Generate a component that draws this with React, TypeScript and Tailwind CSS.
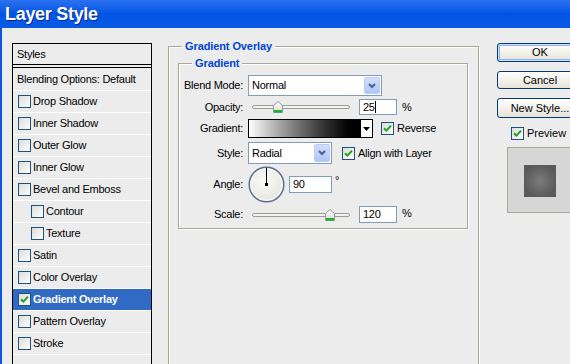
import React from 'react';

const font = "font-['Liberation_Sans',Arial,sans-serif]";

function Check() {
  return (
    <svg width="9" height="9" viewBox="0 0 9 9">
      <path d="M1 4.2 L3.4 6.6 L8 1.6" stroke="#21a121" strokeWidth="2" fill="none" />
    </svg>
  );
}

function Box({ checked }: { checked?: boolean }) {
  return (
    <span className="flex h-[13px] w-[13px] shrink-0 items-center justify-center border border-[#1c5180] bg-linear-to-br from-[#dcdcd7] to-white">
      {checked && <Check />}
    </span>
  );
}

function Select({ width, value }: { width: string; value: string }) {
  return (
    <div className={`flex h-full ${width} items-center border border-[#7f9db9] bg-white`}>
      <span className="flex-1 pl-[3px]">{value}</span>
      <span className="m-[1px] flex h-[calc(100%-2px)] w-[16px] items-center justify-center rounded-[2px] border border-[#bccdf5] bg-linear-to-b from-[#d2defd] to-[#b0c6f8]">
        <svg width="8" height="6" viewBox="0 0 8 6">
          <path d="M1 1 L4 4 L7 1" stroke="#4d6185" strokeWidth="2" fill="none" />
        </svg>
      </span>
    </div>
  );
}

function Slider({ thumb }: { thumb: number }) {
  return (
    <div className="relative ml-[4px] flex h-full w-[98px] items-center">
      <div className="h-[4px] w-full rounded-full border border-[#9d9c99] bg-[#f3f3f0]" />
      <svg
        className="absolute top-1/2 -translate-y-1/2"
        style={{ left: thumb }}
        width="10"
        height="12"
        viewBox="0 0 10 12"
      >
        <defs>
          <linearGradient id="th" x1="0" y1="0" x2="0" y2="1">
            <stop offset="0" stopColor="#ffffff" />
            <stop offset="1" stopColor="#dcdcd4" />
          </linearGradient>
        </defs>
        <path d="M5 0.5 L9.5 4.5 L9.5 11.5 L0.5 11.5 L0.5 4.5 Z" fill="url(#th)" stroke="#8a9aa8" />
        <rect x="1" y="9" width="8" height="2.5" fill="#21b221" />
      </svg>
    </div>
  );
}

function Field({ width, value, caret }: { width: string; value: string; caret?: boolean }) {
  return (
    <div className={`flex h-full ${width} items-center border border-[#7f9db9] bg-white px-[3px]`}>
      <span>{value}</span>
      {caret && <span className="h-[12px] w-[1px] bg-black" />}
    </div>
  );
}

function Label({ children }: { children: React.ReactNode }) {
  return <span className="w-[64px] shrink-0 text-right">{children}</span>;
}

function Dial() {
  return (
    <svg width="37" height="37" viewBox="0 0 37 37">
      <defs>
        <radialGradient id="dl" cx="0.45" cy="0.4" r="0.6">
          <stop offset="0" stopColor="#fbfbf8" />
          <stop offset="1" stopColor="#e6e6e0" />
        </radialGradient>
      </defs>
      <circle cx="18.5" cy="18.5" r="17.3" fill="url(#dl)" stroke="#5d6c93" strokeWidth="1.5" />
      <circle cx="18.5" cy="18.5" r="15.8" fill="none" stroke="#ffffff" strokeWidth="0.8" />
      <line x1="18.5" y1="18.5" x2="18.5" y2="2" stroke="#000" strokeWidth="1" />
      <rect x="17" y="17" width="3" height="3" fill="#000" />
    </svg>
  );
}

const styles = [
  { label: 'Drop Shadow' },
  { label: 'Inner Shadow' },
  { label: 'Outer Glow' },
  { label: 'Inner Glow' },
  { label: 'Bevel and Emboss' },
  { label: 'Contour', indent: true },
  { label: 'Texture', indent: true },
  { label: 'Satin' },
  { label: 'Color Overlay' },
  { label: 'Gradient Overlay', checked: true, selected: true },
  { label: 'Pattern Overlay' },
  { label: 'Stroke' },
];

const groupBox =
  'border border-[#a9a898] shadow-[1px_1px_0_#fff,inset_1px_1px_0_#fff]';

export default function App() {
  return (
    <div className={`${font} flex h-[364px] w-[570px] flex-col overflow-hidden text-[11px] tracking-[-0.25px] text-black`}>
      <div className="flex h-[28px] shrink-0 items-center bg-linear-to-b from-[#2a72f2] via-[#0054e3] to-[#0a5ae6] pl-[5px]">
        <span className="text-[18px] font-bold tracking-[-0.3px] text-white [text-shadow:1px_1px_0_#0a2a88]">
          Layer Style
        </span>
      </div>

      <div className="flex flex-1 items-start border-l-2 border-l-[#0b55e1] bg-[#ececec] pl-[10px]">
        {/* styles list */}
        <div className="mt-[15px] h-[340px] w-[140px] shrink-0 border border-black">
          <div className="flex h-[21px] items-center border-b border-black pl-[4px]">Styles</div>
          <div className="mt-[2px] border-t border-black">
            <div className="flex h-[23px] items-center border-b border-white pl-[4px]">
              Blending Options: Default
            </div>
            {styles.map((s) => (
              <div
                key={s.label}
                className={`flex h-[22px] items-center gap-[2px] border-b border-white ${
                  s.indent ? 'pl-[18px]' : 'pl-[5px]'
                } ${s.selected ? 'bg-[#316ac5] font-bold text-white' : ''}`}
              >
                <Box checked={s.checked} />
                <span>{s.label}</span>
              </div>
            ))}
          </div>
        </div>

        {/* options */}
        <fieldset className={`ml-[16px] mt-[12px] h-[340px] w-[311px] shrink-0 ${groupBox}`}>
          <legend className="ml-[13px] bg-[#ececec] px-[3px] font-bold leading-[13px] tracking-[-0.1px] text-[#0046d5]">
            Gradient Overlay
          </legend>
          <fieldset className={`ml-[9px] mt-[4px] w-[290px] ${groupBox}`}>
            <legend className="ml-[13px] bg-[#ececec] px-[3px] font-bold leading-[13px] tracking-[-0.1px] text-[#0046d5]">
              Gradient
            </legend>
            <div className="flex flex-col pb-[5px] pt-[5px]">
              <div className="flex h-[21px] items-center gap-[5px]">
                <Label>Blend Mode:</Label>
                <Select width="w-[134px]" value="Normal" />
              </div>

              <div className="mt-[3px] flex h-[16px] items-center gap-[5px]">
                <Label>Opacity:</Label>
                <Slider thumb={21} />
                <div className="ml-[4px] flex h-full">
                  <Field width="w-[38px]" value="25" caret />
                </div>
                <span>%</span>
              </div>

              <div className="mt-[4px] flex h-[19px] items-center">
                <Label>Gradient:</Label>
                <div className="ml-[5px] h-full w-[113px] border border-black bg-linear-to-r from-white to-black" />
                <div className="flex h-full w-[12px] items-center justify-center border border-l-0 border-black bg-white">
                  <svg width="7" height="4" viewBox="0 0 7 4">
                    <path d="M0 0 H7 L3.5 4 Z" fill="#000" />
                  </svg>
                </div>
                <span className="ml-[8px]">
                  <Box checked />
                </span>
                <span className="ml-[3px]">Reverse</span>
              </div>

              <div className="mt-[4px] flex h-[22px] items-center">
                <Label>Style:</Label>
                <div className="ml-[5px] flex h-full">
                  <Select width="w-[84px]" value="Radial" />
                </div>
                <span className="ml-[10px]">
                  <Box checked />
                </span>
                <span className="ml-[3px]">Align with Layer</span>
              </div>

              <div className="mt-[2px] flex h-[37px] items-center">
                <Label>Angle:</Label>
                <span className="ml-[5px] flex">
                  <Dial />
                </span>
                <div className="ml-[4px] flex h-[17px]">
                  <Field width="w-[43px]" value="90" />
                </div>
                <span className="ml-[3px] -mt-[8px]">°</span>
              </div>

              <div className="mt-[3px] flex h-[17px] items-center gap-[5px]">
                <Label>Scale:</Label>
                <Slider thumb={73} />
                <div className="ml-[4px] flex h-full">
                  <Field width="w-[38px]" value="120" />
                </div>
                <span className="-mt-[3px]">%</span>
              </div>
            </div>
          </fieldset>
        </fieldset>

        {/* buttons */}
        <div className="ml-[18px] mt-[15px] flex w-[86px] shrink-0 flex-col tracking-normal">
          <div className="flex h-[19px] items-center justify-center rounded-[3px] border border-[#003c74] bg-linear-to-b from-white to-[#e6e3d6] shadow-[inset_0_0_0_1px_#cee0fb,inset_0_0_0_2px_#8fb1ef]">
            OK
          </div>
          <div className="mt-[9px] flex h-[18px] items-center justify-center rounded-[3px] border border-[#003c74] bg-linear-to-b from-white to-[#e6e3d6]">
            Cancel
          </div>
          <div className="mt-[9px] flex h-[20px] items-center justify-center whitespace-nowrap rounded-[3px] border border-[#003c74] bg-linear-to-b from-white to-[#e6e3d6]">
            New Style...
          </div>
          <div className="ml-[14px] mt-[9px] flex h-[13px] items-center gap-[3px]">
            <Box checked />
            <span>Preview</span>
          </div>
          <div className="ml-[10px] mt-[7px] h-[66px] w-[80px] border border-[#a7a697] bg-[#d6d6d6] pl-[16px] pt-[17px]">
            <div className="h-[32px] w-[32px] bg-[radial-gradient(circle,#7c7c7c_0%,#5a5a5a_72%)]" />
          </div>
        </div>
      </div>
    </div>
  );
}
